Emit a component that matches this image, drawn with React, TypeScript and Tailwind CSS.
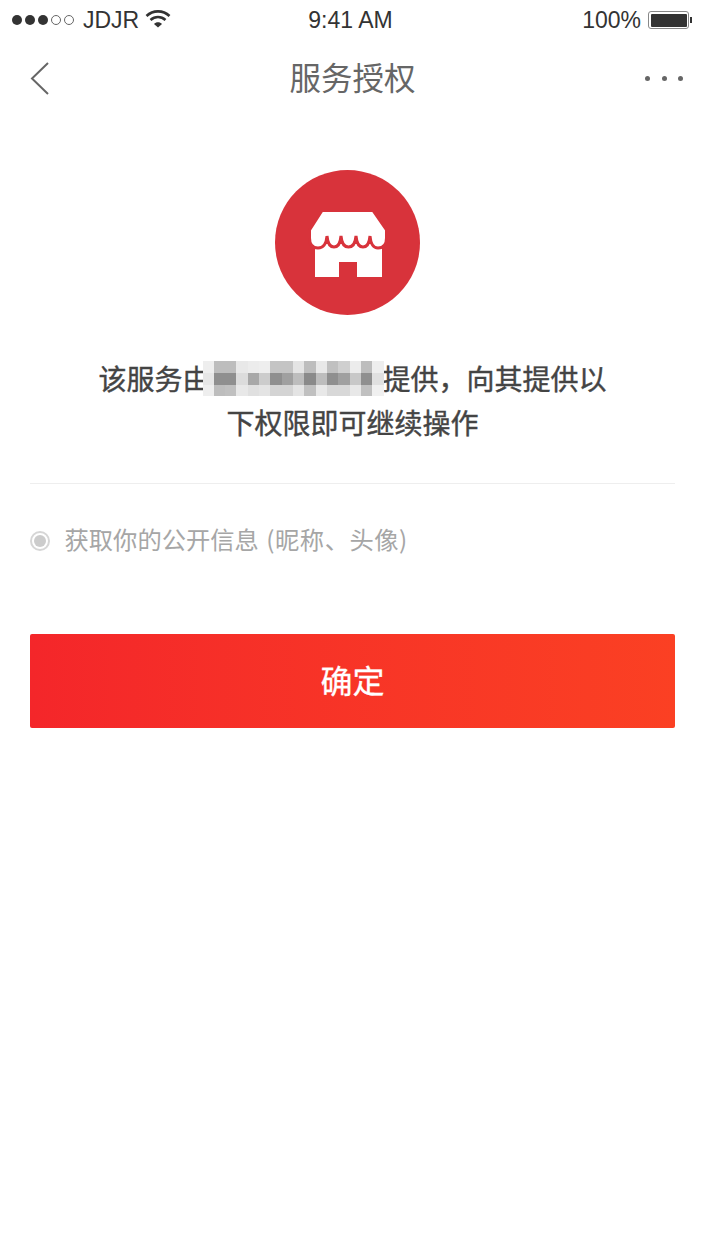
const mosaic = [
  "bg-[#eeeeee]", "bg-[#bdbdbd]", "bg-[#bdbdbd]", "bg-[#e8e8e8]", "bg-[#ececec]", "bg-[#eeeeee]", "bg-[#c4c4c4]", "bg-[#c4c4c4]",
  "bg-[#e4e4e4]", "bg-[#bdbdbd]", "bg-[#e8e8e8]", "bg-[#c0c0c0]", "bg-[#cfcfcf]", "bg-[#ececec]", "bg-[#bdbdbd]", "bg-[#eeeeee]",
  "bg-[#e6e6e6]", "bg-[#8f8f8f]", "bg-[#8f8f8f]", "bg-[#dcdcdc]", "bg-[#a8a8a8]", "bg-[#cccccc]", "bg-[#8f8f8f]", "bg-[#a0a0a0]",
  "bg-[#bdbdbd]", "bg-[#8a8a8a]", "bg-[#bdbdbd]", "bg-[#8f8f8f]", "bg-[#a0a0a0]", "bg-[#c8c8c8]", "bg-[#8f8f8f]", "bg-[#e0e0e0]",
  "bg-[#eeeeee]", "bg-[#bdbdbd]", "bg-[#c0c0c0]", "bg-[#e8e8e8]", "bg-[#e0e0e0]", "bg-[#e4e4e4]", "bg-[#d4d4d4]", "bg-[#d4d4d4]",
  "bg-[#e4e4e4]", "bg-[#c0c0c0]", "bg-[#e8e8e8]", "bg-[#d8d8d8]", "bg-[#d8d8d8]", "bg-[#e8e8e8]", "bg-[#c0c0c0]", "bg-[#f0f0f0]",
];

function StatusBar() {
  return (
    <div className="flex h-[40px] items-center justify-between pl-[12px] pr-[13px] text-[23px] text-[#333] font-['Liberation_Sans',sans-serif]">
      <div className="flex flex-1 items-center">
        <div className="flex gap-[3px]">
          <span className="h-[10px] w-[10px] rounded-full bg-[#333]" />
          <span className="h-[10px] w-[10px] rounded-full bg-[#333]" />
          <span className="h-[10px] w-[10px] rounded-full bg-[#333]" />
          <span className="h-[10px] w-[10px] rounded-full border border-[#666]" />
          <span className="h-[10px] w-[10px] rounded-full border border-[#666]" />
        </div>
        <span className="ml-[9px]">JDJR</span>
        <svg className="ml-[6px] mb-[3px]" width="26" height="19" viewBox="0 0 26 19" fill="none" stroke="#333" strokeWidth="2.6">
          <path d="M1.5 7 C8 0.8 18 0.8 24.500 7" />
          <path d="M5.500 11 C10 7 16 7 20.500 11" />
          <path d="M9 15 L13 18.500 L17 15 C15 12.800 11 12.800 9 15Z" fill="#333" stroke="none" />
        </svg>
      </div>
      <span className="mr-[3px]">9:41 AM</span>
      <div className="flex flex-1 items-center justify-end">
        <span>100%</span>
        <div className="ml-[7px] flex h-[18px] w-[41px] items-center rounded-[3px] border border-[#888] p-[1.5px]">
          <div className="h-full w-full rounded-[1px] bg-[#333]" />
        </div>
        <div className="ml-[1px] h-[6px] w-[2px] bg-[#333]" />
      </div>
    </div>
  );
}

function NavBar() {
  return (
    <div className="flex h-[76px] items-center pl-[30px] pr-[22px]">
      <div className="flex-1">
        <svg className="block" width="20" height="34" viewBox="0 0 20 34" fill="none" stroke="#666" strokeWidth="2">
          <path d="M18 2 L2 17.500 L18 33" />
        </svg>
      </div>
      <h1 className="mb-[2px] mr-[8px] text-[31.5px] leading-none text-[#666]">服务授权</h1>
      <div className="flex flex-1 justify-end gap-[11.500px]">
        <span className="h-[5px] w-[5px] rounded-full bg-[#666]" />
        <span className="h-[5px] w-[5px] rounded-full bg-[#666]" />
        <span className="h-[5px] w-[5px] rounded-full bg-[#666]" />
      </div>
    </div>
  );
}

function StoreLogo() {
  return (
    <svg className="mr-[10px]" width="145" height="145" viewBox="0 0 145 145">
      <circle cx="72.500" cy="72.500" r="72.500" fill="#d8333b" />
      <path d="M40 74 H107 V107 H82 V92 H64 V107 H40Z" fill="#fff" />
      <path
        d="M47 40.500 H98 L111.500 60 V68 Q111.500 78 103 78 Q96 78 95 66 Q94 77 88 77 Q82 77 81 66 Q80 77 73.500 77 Q67 77 66 66 Q65 77 59 77 Q53 77 52 66 Q51 78 43 78 Q34.500 78 34.500 68 V60Z"
        fill="#fff"
        stroke="#d8333b"
        strokeWidth="3"
      />
    </svg>
  );
}

export default function App() {
  return (
    <div className="min-h-[1254px] bg-white font-['Noto_Sans_CJK_SC',sans-serif]">
      <StatusBar />
      <NavBar />
      <div className="flex flex-col items-center pt-[54px]">
        <StoreLogo />
        <p className="mt-[41px] text-center text-[28px] leading-[44px] text-[#444] [-webkit-text-stroke:0.4px_#444]">
          该服务由
          <span className="relative inline-block h-[28px] w-[172px] align-middle">
            <span className="absolute -left-[8px] -top-[7px] grid h-[35px] w-[181px] grid-cols-16 grid-rows-3">
              {mosaic.map((color, i) => (
                <span key={i} className={color} />
              ))}
            </span>
          </span>
          {"提供\uFF0C向其提供以"}
          <br />
          下权限即可继续操作
        </p>
      </div>
      <div className="mx-[30px] mt-[39px] h-px bg-[#eeeeee]" />
      <div className="mx-[30px] mt-[38px] flex items-center gap-[14.5px]">
        <span className="flex h-[20px] w-[20px] items-center justify-center rounded-full border-2 border-[#d6d6d6]">
          <span className="h-[12px] w-[12px] rounded-full bg-[#cccccc]" />
        </span>
        <span className="mb-[3px] text-[24.3px] leading-[34px] text-[#a6a6a6] [word-spacing:2px]">
          获取你的公开信息 <span className="tracking-[0.5px]">(昵称、头像)</span>
        </span>
      </div>
      <button className="mx-[30px] mt-[75px] flex h-[94px] w-[645px] items-center justify-center rounded-[2px] bg-gradient-to-r from-[#f4262a] to-[#fb4023] pb-[5px] text-[32px] text-white [-webkit-text-stroke:0.3px_#fff]">
        确定
      </button>
    </div>
  );
}
